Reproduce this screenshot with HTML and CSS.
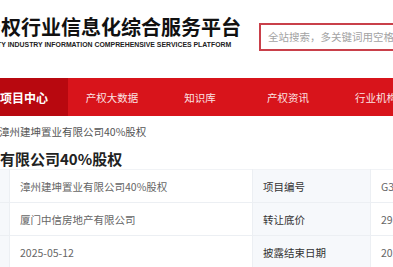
FILE: index.html
```html
<!DOCTYPE html>
<html lang="zh-CN">
<head>
  <meta charset="UTF-8" />
  <meta name="viewport" content="width=device-width, initial-scale=1" />
  <title>项目详情 - 产权行业信息化综合服务平台</title>
  <link rel="stylesheet" href="styles.css">
</head>
<body>
  <div class="header">
    <div class="logo">
      <div class="logo-title">产权行业信息化综合服务平台</div>
      <div class="logo-sub">PROPERTY INDUSTRY INFORMATION COMPREHENSIVE SERVICES PLATFORM</div>
    </div>
    <div class="search">
      <input type="text" placeholder="全站搜索，多关键词用空格分隔" />
    </div>
  </div>

  <div class="nav">
    <a class="nav-item active" href="#">项目中心</a>
    <a class="nav-item" href="#">产权大数据</a>
    <a class="nav-item" href="#">知识库</a>
    <a class="nav-item" href="#">产权资讯</a>
    <a class="nav-item" href="#">行业机构</a>
  </div>

  <div class="crumb">漳州建坤置业有限公司40%股权</div>
  <h1 class="title">漳州建坤置业有限公司40%股权</h1>

  <table class="info">
    <colgroup>
      <col class="c-label-l" />
      <col class="c-value-l" />
      <col class="c-label-r" />
      <col class="c-value-r" />
    </colgroup>
    <tr>
      <th>项目名称</th>
      <td>漳州建坤置业有限公司40%股权</td>
      <th>项目编号</th>
      <td>G32025FJ1000056</td>
    </tr>
    <tr>
      <th>转让方名称</th>
      <td>厦门中信房地产有限公司</td>
      <th>转让底价</th>
      <td>2980.00万元</td>
    </tr>
    <tr>
      <th>披露开始日期</th>
      <td>2025-05-12</td>
      <th>披露结束日期</th>
      <td>2025-06-10</td>
    </tr>
  </table>
</body>
</html>
```

FILE: styles.css
```css
body {
  margin: 0;
  background: #fff;
  color: #333;
  font-family: "Noto Sans CJK SC", "Noto Sans", sans-serif;
  overflow: hidden;
}

.header {
  display: flex;
  align-items: flex-start;
  gap: 18px;
  height: 78px;
}
.logo {
  margin-left: -19px;
  width: 260px;
  padding-top: 15px;
}
.logo-title {
  font-size: 20px;
  line-height: 24px;
  font-weight: bold;
  color: #111;
  white-space: nowrap;
}
.logo-sub {
  margin-top: 1px;
  margin-left: -13px;
  font-family: "Liberation Sans", Arial, sans-serif;
  font-size: 6.9px;
  line-height: 10px;
  font-weight: bold;
  color: #222;
  white-space: nowrap;
}
.search {
  margin-top: 22px;
  flex: none;
}
.search input {
  width: 300px;
  height: 28px;
  box-sizing: border-box;
  border: 2px solid #c9404a;
  padding: 0 7px;
  font-family: inherit;
  font-size: 10.5px;
  outline: none;
}
.search input::placeholder {
  color: #a3a3a3;
}

.nav {
  display: flex;
  height: 38px;
  margin-left: -20px;
  background: #d8141b;
}
.nav-item {
  flex: none;
  width: 88px;
  display: flex;
  align-items: center;
  justify-content: center;
  color: #fbe3e3;
  font-size: 10.5px;
  text-decoration: none;
  white-space: nowrap;
}
.nav-item.active {
  background: #b8080f;
  color: #fff;
  font-size: 12px;
  font-weight: bold;
}

.crumb {
  padding-top: 8px;
  margin-left: -1px;
  font-size: 10.5px;
  line-height: 16px;
  color: #555;
  white-space: nowrap;
}
.title {
  margin: 9px 0 0 -90px;
  font-size: 15px;
  line-height: 20px;
  font-weight: bold;
  color: #222;
  white-space: nowrap;
}

.info {
  margin-left: -91px;
  border-collapse: collapse;
  table-layout: fixed;
  width: 661px;
  font-size: 10.5px;
}
.c-label-l { width: 100px; }
.c-value-l { width: 243px; }
.c-label-r { width: 118px; }
.c-value-r { width: 200px; }
.info th,
.info td {
  height: 32px;
  padding: 0 10px;
  border: 1px solid #eceff3;
  text-align: left;
  white-space: nowrap;
}
.info th {
  background: #f6f8fb;
  font-weight: normal;
  color: #333;
}
.info td {
  color: #666;
}
.info tr:first-child th,
.info tr:first-child td {
  border-top-color: #f1f3f6;
}
```
